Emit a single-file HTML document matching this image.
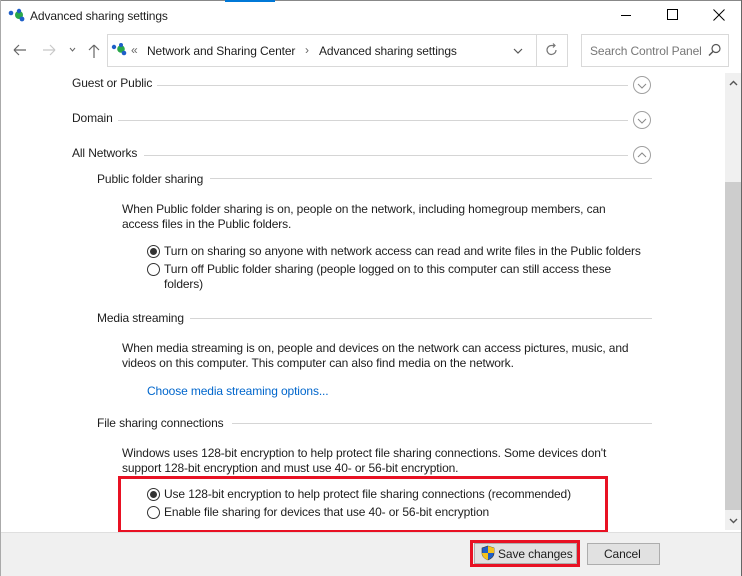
<!DOCTYPE html>
<html><head><meta charset="utf-8"><style>
*{margin:0;padding:0;box-sizing:border-box}
body{width:742px;height:576px;overflow:hidden;background:#fff;font-family:"Liberation Sans",sans-serif;font-size:12px;letter-spacing:-0.12px;color:#1e1e1e;position:relative}
.a{position:absolute;white-space:nowrap}
.line{position:absolute;height:1px;background:#d5d5d5}
.circ{position:absolute;width:18px;height:18px;border:1px solid #a0a0a0;border-radius:50%}
.radio{position:absolute;width:13px;height:13px;border:1px solid #333;border-radius:50%;background:#fff}
.radio.on::after{content:"";position:absolute;left:2px;top:2px;width:7px;height:7px;border-radius:50%;background:#333}
</style></head><body>
<div class="a" style="left:0;top:0;width:742px;height:1px;background:#888"></div>
<div class="a" style="left:225px;top:0;width:50px;height:2px;background:#0078d7"></div>
<div class="a" style="left:741px;top:0;width:1px;height:576px;background:#666"></div>
<div class="a" style="left:0;top:0;width:1px;height:576px;background:#aaa"></div>
<svg class="a" style="left:8px;top:8px" width="18" height="14"><circle cx="3" cy="5" r="2.3" fill="#1e5fc8"/><circle cx="11" cy="7" r="4" fill="#2aa84a"/><circle cx="11" cy="3" r="2.2" fill="#1e5fc8"/><circle cx="14" cy="11" r="2.4" fill="#1e5fc8"/></svg>
<div class="a" style="left:30px;top:9px">Advanced sharing settings</div>
<div class="a" style="left:621px;top:15px;width:10px;height:1px;background:#000"></div>
<div class="a" style="left:667px;top:9px;width:11px;height:11px;border:1px solid #000"></div>
<svg class="a" style="left:713px;top:9px" width="12" height="12"><path d="M0.5 0.5L11.5 11.5M11.5 0.5L0.5 11.5" stroke="#000" stroke-width="1"/></svg>
<svg class="a" style="left:12px;top:43px" width="70" height="16"><path d="M2 7H14M2 7L7 2M2 7L7 12" stroke="#666" fill="none" stroke-width="1.2"/><path d="M31 7H43M43 7L38 2M43 7L38 12" stroke="#c8c8c8" fill="none" stroke-width="1.2"/><path d="M58 5L60.5 8L63 5" stroke="#666" fill="none"/></svg>
<svg class="a" style="left:86px;top:43px" width="16" height="16"><path d="M8 15V2M8 2L3 7M8 2L13 7" stroke="#666" fill="none" stroke-width="1.2"/></svg>
<div class="a" style="left:107px;top:34px;width:461px;height:33px;border:1px solid #d9d9d9"></div>
<div class="a" style="left:536px;top:34px;width:1px;height:33px;background:#d9d9d9"></div>
<svg class="a" style="left:111px;top:42px" width="16" height="14"><circle cx="3" cy="5" r="2.2" fill="#1e5fc8"/><circle cx="10" cy="7" r="3.8" fill="#2aa84a"/><circle cx="10" cy="3" r="2" fill="#1e5fc8"/><circle cx="13" cy="11" r="2.3" fill="#1e5fc8"/></svg>
<div class="a" style="left:131px;top:43px;color:#666">«</div>
<div class="a" style="left:147px;top:44px">Network and Sharing Center</div>
<div class="a" style="left:305px;top:43px;color:#666">›</div>
<div class="a" style="left:319px;top:44px">Advanced sharing settings</div>
<svg class="a" style="left:513px;top:47px" width="10" height="8"><path d="M1 2L5 6L9 2" stroke="#555" fill="none" stroke-width="1.2"/></svg>
<svg class="a" style="left:545px;top:43px" width="14" height="15"><path d="M11 7A4.5 4.5 0 1 1 7 2.5H10M8 0.5L10 2.5L8 4.5" stroke="#777" fill="none" stroke-width="1.2"/></svg>
<div class="a" style="left:581px;top:34px;width:148px;height:33px;border:1px solid #d9d9d9"></div>
<div class="a" style="left:590px;top:44px;color:#777">Search Control Panel</div>
<svg class="a" style="left:708px;top:43px" width="14" height="14"><circle cx="8" cy="5.5" r="4" stroke="#555" fill="none" stroke-width="1.2"/><path d="M5 8.5L1 12.5" stroke="#555" stroke-width="1.5"/></svg>
<div class="a" style="left:725px;top:73px;width:16px;height:457px;background:#f0f0f0"></div>
<div class="a" style="left:725px;top:182px;width:16px;height:328px;background:#cdcdcd"></div>
<svg class="a" style="left:729px;top:80px" width="9" height="6"><path d="M1 5L4.5 1.5L8 5" stroke="#555" fill="none" stroke-width="1.4"/></svg>
<svg class="a" style="left:729px;top:518px" width="9" height="6"><path d="M1 1L4.5 4.5L8 1" stroke="#555" fill="none" stroke-width="1.4"/></svg>
<div class="a" style="left:72px;top:76px">Guest or Public</div>
<div class="line" style="left:157px;top:85px;width:471px"></div>
<div class="circ" style="left:633px;top:76px"></div>
<svg class="a" style="left:637px;top:83px" width="10" height="6"><path d="M1 1L5 5L9 1" stroke="#888" fill="none"/></svg>
<div class="a" style="left:72px;top:111px">Domain</div>
<div class="line" style="left:118px;top:120px;width:510px"></div>
<div class="circ" style="left:633px;top:111px"></div>
<svg class="a" style="left:637px;top:118px" width="10" height="6"><path d="M1 1L5 5L9 1" stroke="#888" fill="none"/></svg>
<div class="a" style="left:72px;top:146px">All Networks</div>
<div class="line" style="left:144px;top:155px;width:484px"></div>
<div class="circ" style="left:633px;top:146px"></div>
<svg class="a" style="left:637px;top:152px" width="10" height="6"><path d="M1 5L5 1L9 5" stroke="#888" fill="none"/></svg>
<div class="a" style="left:97px;top:172px">Public folder sharing</div>
<div class="line" style="left:210px;top:178px;width:442px"></div>
<div class="a" style="left:122px;top:202px;line-height:15px">When Public folder sharing is on, people on the network, including homegroup members, can<br>access files in the Public folders.</div>
<div class="radio on" style="left:147px;top:245px"></div>
<div class="a" style="left:164px;top:244px">Turn on sharing so anyone with network access can read and write files in the Public folders</div>
<div class="radio" style="left:147px;top:263px"></div>
<div class="a" style="left:164px;top:262px;line-height:15px">Turn off Public folder sharing (people logged on to this computer can still access these<br>folders)</div>
<div class="a" style="left:97px;top:311px">Media streaming</div>
<div class="line" style="left:190px;top:318px;width:462px"></div>
<div class="a" style="left:122px;top:341px;line-height:15px">When media streaming is on, people and devices on the network can access pictures, music, and<br>videos on this computer. This computer can also find media on the network.</div>
<div class="a" style="left:147px;top:384px;color:#0066cc">Choose media streaming options...</div>
<div class="a" style="left:97px;top:416px">File sharing connections</div>
<div class="line" style="left:232px;top:423px;width:420px"></div>
<div class="a" style="left:122px;top:446px;line-height:15px">Windows uses 128-bit encryption to help protect file sharing connections. Some devices don't<br>support 128-bit encryption and must use 40- or 56-bit encryption.</div>
<div class="a" style="left:118px;top:476px;width:490px;height:57px;border:3px solid #e81123"></div>
<div class="radio on" style="left:147px;top:488px"></div>
<div class="a" style="left:164px;top:487px">Use 128-bit encryption to help protect file sharing connections (recommended)</div>
<div class="radio" style="left:147px;top:506px"></div>
<div class="a" style="left:164px;top:505px">Enable file sharing for devices that use 40- or 56-bit encryption</div>
<div class="a" style="left:1px;top:532px;width:740px;height:44px;background:#f0f0f0;border-top:1px solid #dfdfdf"></div>
<div class="a" style="left:470px;top:540px;width:110px;height:27px;border:3px solid #e81123"></div>
<div class="a" style="left:474px;top:543px;width:103px;height:21px;background:#e1e1e1;border:1px solid #adadad"></div>
<svg class="a" style="left:481px;top:545px" width="14" height="16"><path d="M7 1L13 3V8C13 11.5 10 14 7 15C4 14 1 11.5 1 8V3Z" fill="#1f5fc8" stroke="#333" stroke-width="0.6"/><path d="M7 1V8H13V3ZM7 8H1C1 11.5 4 14 7 15Z" fill="#f5c21b"/></svg>
<div class="a" style="left:498px;top:547px">Save changes</div>
<div class="a" style="left:587px;top:543px;width:73px;height:22px;background:#e1e1e1;border:1px solid #adadad"></div>
<div class="a" style="left:604px;top:547px">Cancel</div>
</body></html>
